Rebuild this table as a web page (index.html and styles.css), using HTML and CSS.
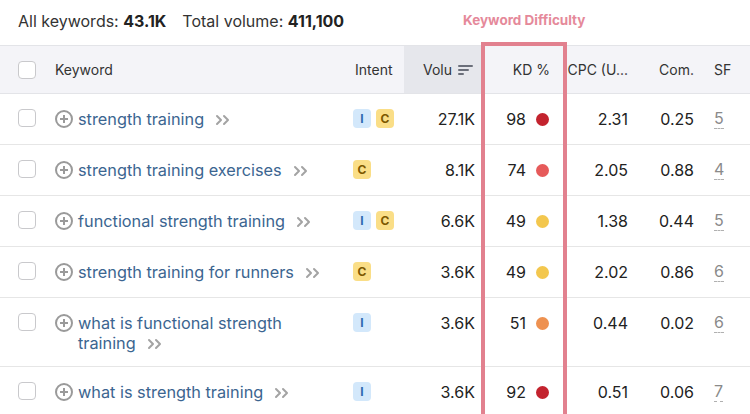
FILE: index.html
```html
<!DOCTYPE html>
<html>
<head>
<meta charset="utf-8">
<link rel="stylesheet" href="styles.css">
</head>
<body>
<div class="page">
  <div class="summary">
    <span>All keywords: <b>43.1K</b></span>
    <span>Total volume: <b>411,100</b></span>
  </div>
  <div class="annot">Keyword Difficulty</div>
  <div class="kd-frame"></div>

  <div class="table">
    <div class="row head">
      <div class="c-check"><span class="cb"></span></div>
      <div class="c-kw">Keyword</div>
      <div class="c-intent">Intent</div>
      <div class="c-vol sorted">Volu<svg class="sort" width="15" height="12" viewBox="0 0 15 12"><path d="M1 2h13M1 6h9M1 10h4" stroke="#6b6f7a" stroke-width="2" stroke-linecap="round"/></svg></div>
      <div class="c-kd">KD %</div>
      <div class="c-cpc">CPC (U...</div>
      <div class="c-com">Com.</div>
      <div class="c-sf">SF</div>
    </div>

    <div class="row">
      <div class="c-check"><span class="cb"></span></div>
      <div class="c-kw"><svg class="plus" width="18" height="18" viewBox="0 0 18 18"><circle cx="9" cy="9" r="8" fill="none" stroke="#9a9a9a" stroke-width="2"/><path d="M9 5v8M5 9h8" stroke="#9a9a9a" stroke-width="2"/></svg><span class="kw">strength training<svg class="chev" width="16" height="12" viewBox="0 0 16 12"><path d="M2 2l4 4-4 4M9 2l4 4-4 4" fill="none" stroke="#a3a3a3" stroke-width="2" stroke-linecap="round" stroke-linejoin="round"/></svg></span></div>
      <div class="c-intent"><span class="bi">I</span><span class="bc">C</span></div>
      <div class="c-vol">27.1K</div>
      <div class="c-kd">98<span class="dot d-dark"></span></div>
      <div class="c-cpc">2.31</div>
      <div class="c-com">0.25</div>
      <div class="c-sf"><span class="sf">5</span></div>
    </div>

    <div class="row">
      <div class="c-check"><span class="cb"></span></div>
      <div class="c-kw"><svg class="plus" width="18" height="18" viewBox="0 0 18 18"><circle cx="9" cy="9" r="8" fill="none" stroke="#9a9a9a" stroke-width="2"/><path d="M9 5v8M5 9h8" stroke="#9a9a9a" stroke-width="2"/></svg><span class="kw">strength training exercises<svg class="chev" width="16" height="12" viewBox="0 0 16 12"><path d="M2 2l4 4-4 4M9 2l4 4-4 4" fill="none" stroke="#a3a3a3" stroke-width="2" stroke-linecap="round" stroke-linejoin="round"/></svg></span></div>
      <div class="c-intent"><span class="bc">C</span></div>
      <div class="c-vol">8.1K</div>
      <div class="c-kd">74<span class="dot d-red"></span></div>
      <div class="c-cpc">2.05</div>
      <div class="c-com">0.88</div>
      <div class="c-sf"><span class="sf">4</span></div>
    </div>

    <div class="row">
      <div class="c-check"><span class="cb"></span></div>
      <div class="c-kw"><svg class="plus" width="18" height="18" viewBox="0 0 18 18"><circle cx="9" cy="9" r="8" fill="none" stroke="#9a9a9a" stroke-width="2"/><path d="M9 5v8M5 9h8" stroke="#9a9a9a" stroke-width="2"/></svg><span class="kw">functional strength training<svg class="chev" width="16" height="12" viewBox="0 0 16 12"><path d="M2 2l4 4-4 4M9 2l4 4-4 4" fill="none" stroke="#a3a3a3" stroke-width="2" stroke-linecap="round" stroke-linejoin="round"/></svg></span></div>
      <div class="c-intent"><span class="bi">I</span><span class="bc">C</span></div>
      <div class="c-vol">6.6K</div>
      <div class="c-kd">49<span class="dot d-yellow"></span></div>
      <div class="c-cpc">1.38</div>
      <div class="c-com">0.44</div>
      <div class="c-sf"><span class="sf">5</span></div>
    </div>

    <div class="row">
      <div class="c-check"><span class="cb"></span></div>
      <div class="c-kw"><svg class="plus" width="18" height="18" viewBox="0 0 18 18"><circle cx="9" cy="9" r="8" fill="none" stroke="#9a9a9a" stroke-width="2"/><path d="M9 5v8M5 9h8" stroke="#9a9a9a" stroke-width="2"/></svg><span class="kw">strength training for runners<svg class="chev" width="16" height="12" viewBox="0 0 16 12"><path d="M2 2l4 4-4 4M9 2l4 4-4 4" fill="none" stroke="#a3a3a3" stroke-width="2" stroke-linecap="round" stroke-linejoin="round"/></svg></span></div>
      <div class="c-intent"><span class="bc">C</span></div>
      <div class="c-vol">3.6K</div>
      <div class="c-kd">49<span class="dot d-yellow"></span></div>
      <div class="c-cpc">2.02</div>
      <div class="c-com">0.86</div>
      <div class="c-sf"><span class="sf">6</span></div>
    </div>

    <div class="row">
      <div class="c-check"><span class="cb"></span></div>
      <div class="c-kw"><svg class="plus" width="18" height="18" viewBox="0 0 18 18"><circle cx="9" cy="9" r="8" fill="none" stroke="#9a9a9a" stroke-width="2"/><path d="M9 5v8M5 9h8" stroke="#9a9a9a" stroke-width="2"/></svg><span class="kw narrow">what is functional strength training<svg class="chev" width="16" height="12" viewBox="0 0 16 12"><path d="M2 2l4 4-4 4M9 2l4 4-4 4" fill="none" stroke="#a3a3a3" stroke-width="2" stroke-linecap="round" stroke-linejoin="round"/></svg></span></div>
      <div class="c-intent"><span class="bi">I</span></div>
      <div class="c-vol">3.6K</div>
      <div class="c-kd">51<span class="dot d-orange"></span></div>
      <div class="c-cpc">0.44</div>
      <div class="c-com">0.02</div>
      <div class="c-sf"><span class="sf">6</span></div>
    </div>

    <div class="row">
      <div class="c-check"><span class="cb"></span></div>
      <div class="c-kw"><svg class="plus" width="18" height="18" viewBox="0 0 18 18"><circle cx="9" cy="9" r="8" fill="none" stroke="#9a9a9a" stroke-width="2"/><path d="M9 5v8M5 9h8" stroke="#9a9a9a" stroke-width="2"/></svg><span class="kw">what is strength training<svg class="chev" width="16" height="12" viewBox="0 0 16 12"><path d="M2 2l4 4-4 4M9 2l4 4-4 4" fill="none" stroke="#a3a3a3" stroke-width="2" stroke-linecap="round" stroke-linejoin="round"/></svg></span></div>
      <div class="c-intent"><span class="bi">I</span></div>
      <div class="c-vol">3.6K</div>
      <div class="c-kd">92<span class="dot d-dark"></span></div>
      <div class="c-cpc">0.51</div>
      <div class="c-com">0.06</div>
      <div class="c-sf"><span class="sf">7</span></div>
    </div>
  </div>
</div>
</body>
</html>
```

FILE: styles.css
```css
* { box-sizing: border-box; }
html, body { margin: 0; padding: 0; background: #fff; }
body {
  font-family: Inter, "Noto Sans", "Liberation Sans", sans-serif;
  color: #222;
  width: 750px;
  height: 414px;
  overflow: hidden;
}
.page { position: relative; width: 750px; }

.summary {
  height: 45px;
  display: flex;
  align-items: center;
  gap: 16px;
  padding: 0 0 4px 18px;
  font-size: 16px;
  color: #333;
}
.summary b { font-weight: 700; color: #222; }

.annot {
  position: absolute;
  left: 463px;
  top: 12px;
  font-size: 13.5px;
  font-weight: 700;
  color: #e5899a;
}
.kd-frame {
  position: absolute;
  left: 481px;
  top: 42px;
  width: 86px;
  height: 400px;
  border: 4px solid #e2818f;
  border-bottom: none;
  z-index: 5;
}

.table { border-top: 1px solid #e3e4e8; }
.row {
  display: grid;
  grid-template-columns: 55px 290px 59px 79px 82px 71px 66px 48px;
  border-bottom: 1px solid #e6e6e6;
  min-height: 51px;
  font-size: 16px;
  line-height: 20px;
}
.row > div { padding-top: 15px; padding-bottom: 13px; display: flex; align-items: flex-start; }

.row.head {
  background: #f4f4f8;
  min-height: 48px;
  font-size: 14px;
  color: #333;
  border-bottom: 1px solid #e3e4e8;
}
.row.head > div { align-items: center; padding-top: 0; padding-bottom: 0; }

.c-check { padding-left: 18px; }
.cb {
  display: block;
  width: 18px;
  height: 18px;
  border: 1px solid #c9c9cc;
  border-radius: 4px;
  background: #fff;
  margin-top: 0;
}

.c-kw { gap: 5px; }
.plus { flex: none; margin-top: 1px; }
.kw { color: #3b6590; font-size: 16.3px; }
.kw.narrow { width: 215px; }
.chev { margin-left: 11px; vertical-align: -1px; }

.c-intent { padding-left: 8px; gap: 5px; }
.head .c-intent { padding-left: 10px; }
.bi, .bc {
  display: inline-flex;
  align-items: center;
  justify-content: center;
  width: 18px;
  height: 19px;
  border-radius: 4px;
  font-size: 12px;
  font-weight: 700;
  margin-top: 0;
}
.bi { background: #d3e8fb; color: #2f6ab0; }
.bc { background: #fade87; color: #7d5800; }

.c-vol { justify-content: flex-end; padding-right: 8px; }
.head .c-vol { background: #e6e7ec; padding-right: 10px; }
.sorted { color: #333; }
.sort { margin-left: 6px; }

.c-kd { justify-content: flex-end; padding-right: 16px; }
.head .c-kd { padding-right: 15px; }
.dot {
  display: inline-block;
  width: 13px;
  height: 13px;
  border-radius: 50%;
  margin-left: 10px;
  margin-top: 4px;
}
.d-dark { background: #c3232e; }
.d-red { background: #e65a5a; }
.d-yellow { background: #f3c74e; }
.d-orange { background: #ee9150; }

.c-cpc { justify-content: flex-end; padding-right: 8px; }
.c-com { justify-content: flex-end; padding-right: 8px; }
.c-sf { padding-left: 12px; }
.sf {
  color: #8a8a8a;
  border-bottom: 1px dashed #b0b0b0;
  line-height: 19px;
}
```
